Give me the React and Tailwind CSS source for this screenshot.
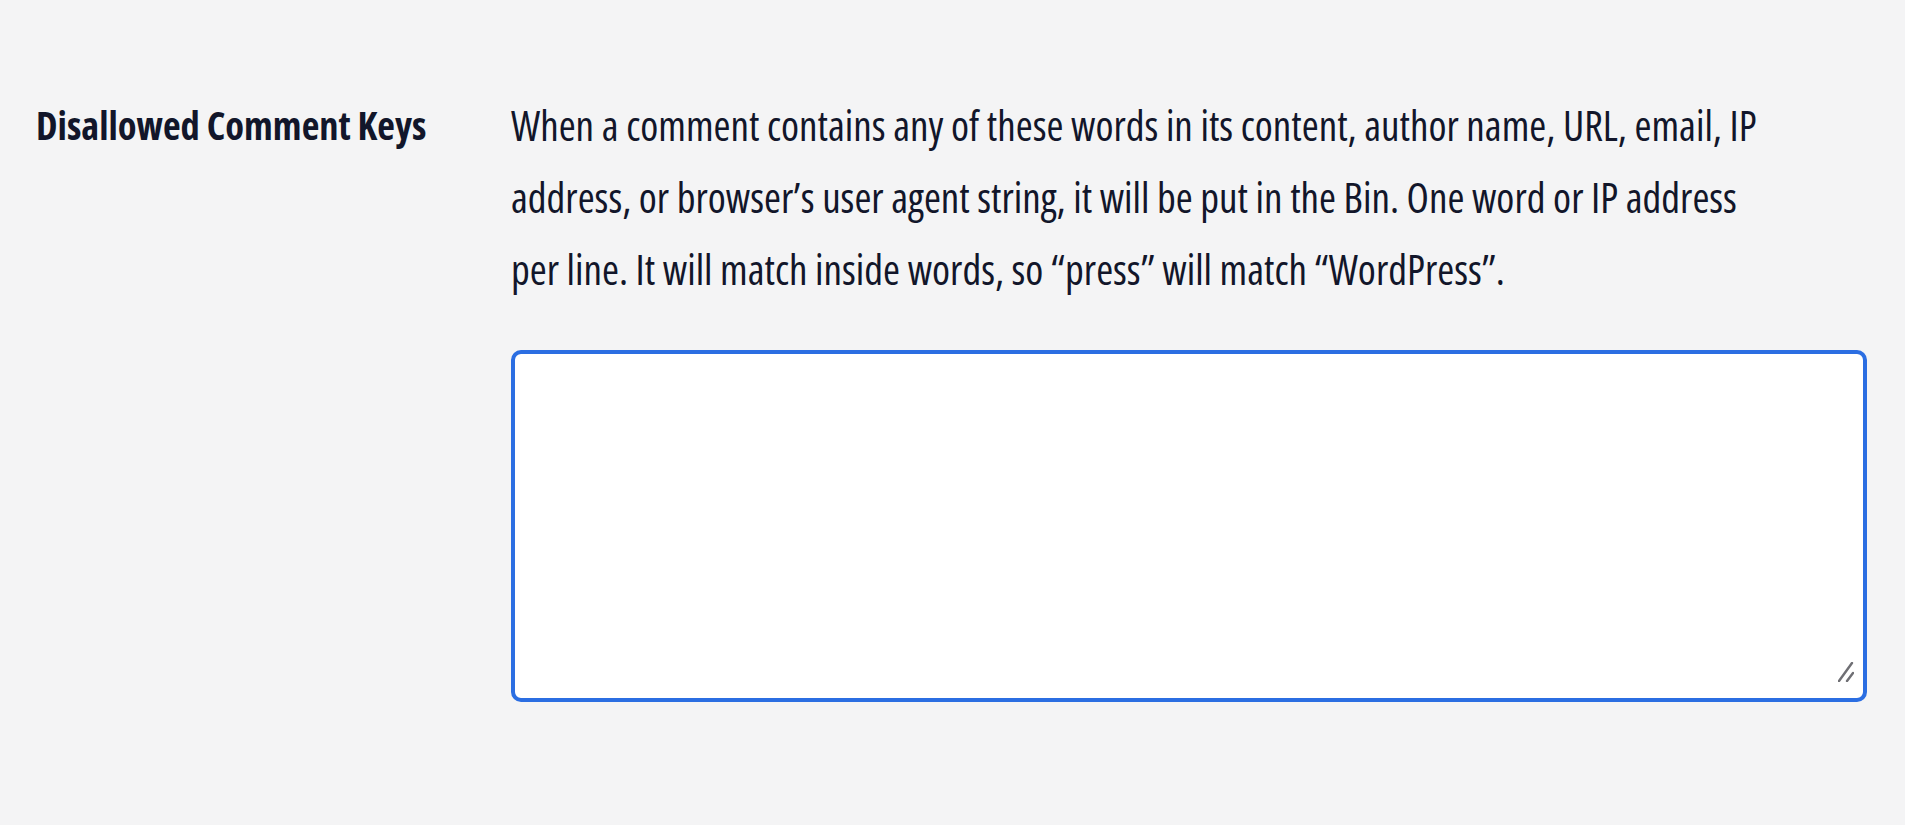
export default function App() {
  return (
    <div className="min-h-screen w-full bg-[#f4f4f5] text-[#12162a] font-['Open_Sans',sans-serif] [font-stretch:condensed]">
      <div className="flex items-start pt-[89px] pl-[36px] pr-[38px]">
        <div className="w-[475px] shrink-0">
          <h2 className="text-[38.5px] leading-[72px] font-bold">
            Disallowed Comment Keys
          </h2>
        </div>
        <div className="flex-1 flex flex-col">
          <p className="text-[41px] leading-[72px] max-w-[1268px]">
            When a comment contains any of these words in its content, author name, URL, email, IP
            address, or browser’s user agent string, it will be put in the Bin. One word or IP address
            per line. It will match inside words, so “press” will match “WordPress”.
          </p>
          <div className="relative mt-[45px]">
            <textarea
              className="block h-[352px] w-full bg-white border-[4px] border-[#2b6ee2] rounded-[10px] outline-none p-3 text-[24px] resize-none"
              aria-label="Disallowed Comment Keys"
            />
            <svg
              className="absolute right-[13px] bottom-[20px] pointer-events-none"
              width="16"
              height="20"
              viewBox="0 0 16 20"
            >
              <line x1="1" y1="19" x2="14" y2="1" stroke="#6f6f74" strokeWidth="2.4" strokeLinecap="round" />
              <line x1="9" y1="19" x2="15" y2="11" stroke="#6f6f74" strokeWidth="2.4" strokeLinecap="round" />
            </svg>
          </div>
        </div>
      </div>
    </div>
  )
}
